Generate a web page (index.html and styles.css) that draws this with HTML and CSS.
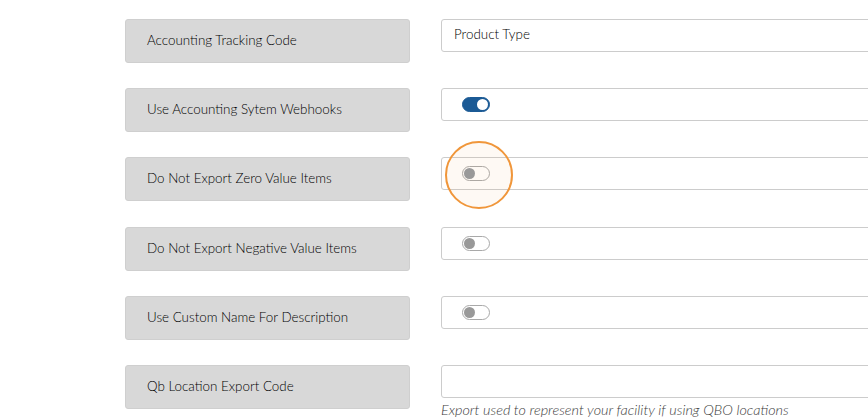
FILE: index.html
```html
<!DOCTYPE html>
<html lang="en">
<head>
<meta charset="utf-8">
<title>Accounting Settings</title>
<link rel="stylesheet" href="styles.css">
</head>
<body>
<div class="settings">
  <div class="row">
    <div class="label">Accounting Tracking Code</div>
    <div class="field">
      <div class="control text">Product Type</div>
    </div>
  </div>
  <div class="row">
    <div class="label">Use Accounting Sytem Webhooks</div>
    <div class="field">
      <div class="control"><span class="switch on"></span></div>
    </div>
  </div>
  <div class="row">
    <div class="label">Do Not Export Zero Value Items</div>
    <div class="field">
      <div class="control"><span class="switch"><span class="focus-ring"></span></span></div>
    </div>
  </div>
  <div class="row">
    <div class="label">Do Not Export Negative Value Items</div>
    <div class="field">
      <div class="control"><span class="switch"></span></div>
    </div>
  </div>
  <div class="row">
    <div class="label">Use Custom Name For Description</div>
    <div class="field">
      <div class="control"><span class="switch"></span></div>
    </div>
  </div>
  <div class="row">
    <div class="label">Qb Location Export Code</div>
    <div class="field">
      <div class="control text"></div>
      <div class="help">Export used to represent your facility if using QBO locations</div>
    </div>
  </div>
</div>
</body>
</html>
```

FILE: styles.css
```css
html, body {
  margin: 0;
  background: #ffffff;
  overflow: hidden;
}

body {
  font-family: Lato, "Open Sans", sans-serif;
  font-size: 13.4px;
  font-weight: 300;
  color: #000;
}

.settings {
  display: flex;
  flex-direction: column;
  gap: 25.2px;
  padding: 19px 0 0 125px;
}

.row {
  display: grid;
  grid-template-columns: 285px 460px;
  column-gap: 31px;
  align-items: start;
}

.label {
  box-sizing: border-box;
  height: 44px;
  padding: 0 0 2px 21px;
  display: flex;
  align-items: center;
  background: #d8d8d8;
  border: 1px solid #cfcfcf;
  border-radius: 3px;
}

.control {
  box-sizing: border-box;
  height: 33px;
  border: 1px solid #cccccc;
  border-radius: 3px;
  background: #fff;
  display: flex;
  align-items: center;
  padding-left: 20px;
}

.control.text {
  padding: 0 0 3px 12px;
}

.switch {
  position: relative;
  box-sizing: border-box;
  width: 28px;
  height: 15px;
  border: 1px solid #a9a9a9;
  border-radius: 8px;
  background: #fff;
}

.switch::after {
  content: "";
  position: absolute;
  top: 1px;
  left: 1px;
  width: 11px;
  height: 11px;
  border-radius: 50%;
  background: #999;
}

.switch.on {
  background: #1b5a95;
  border-color: #1b5a95;
}

.switch.on::after {
  left: auto;
  right: 1px;
  background: #fff;
}

.focus-ring {
  position: absolute;
  left: -18px;
  top: -26px;
  width: 64px;
  height: 64px;
  border: 2.5px solid #f0963a;
  border-radius: 50%;
  background: rgba(245, 150, 60, 0.06);
}

.help {
  margin-top: 3px;
  font-size: 14.4px;
  font-style: italic;
  color: #3c3c3c;
}
```
